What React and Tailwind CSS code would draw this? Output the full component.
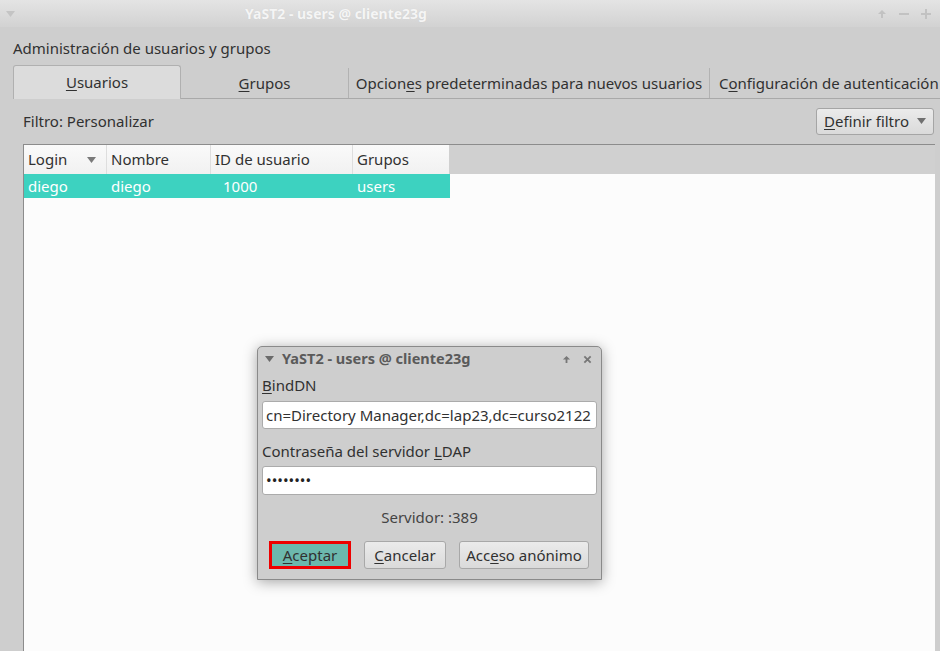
import React from "react";

function U({ children }) {
  return <span className="underline underline-offset-2 decoration-1">{children}</span>;
}

function Tri({ className = "" }) {
  return (
    <svg width="9" height="6" viewBox="0 0 9 6" className={className}>
      <path d="M0 0 L9 0 L4.5 6 Z" fill="currentColor" />
    </svg>
  );
}

export default function App() {
  return (
    <div
      className="relative w-[940px] h-[651px] overflow-hidden bg-[#cecece] text-[15px] text-[#313131]"
      style={{ fontFamily: '"Noto Sans", "Open Sans", sans-serif' }}
    >
      {/* Title bar */}
      <div className="relative h-[27px] flex items-center bg-gradient-to-b from-[#e4e4e4] to-[#d2d2d2] text-[14px]">
        <Tri className="ml-[6px] text-[#c4c4c4]" />
        <div className="ml-[230px] font-bold text-[#f5f5f5] [text-shadow:0_0_1px_rgba(0,0,0,0.08)]">
          YaST2 - users @ cliente23g
        </div>
        <div className="ml-auto mr-[9px] flex items-center gap-[12px] text-[#c2c2c2]">
          <svg width="10" height="10" viewBox="0 0 10 10">
            <path d="M5 1 L9 5 H6 V9 H4 V5 H1 Z" fill="currentColor" />
          </svg>
          <svg width="10" height="10" viewBox="0 0 10 10">
            <rect x="0" y="4" width="10" height="2" fill="currentColor" />
          </svg>
          <svg width="10" height="10" viewBox="0 0 10 10">
            <path d="M4 0 H6 V4 H10 V6 H6 V10 H4 V6 H0 V4 H4 Z" fill="currentColor" />
          </svg>
        </div>
      </div>

      {/* Heading */}
      <div className="pl-[13px] mt-[11px] h-[20px] leading-[20px]">Administración de usuarios y grupos</div>

      {/* Tabs */}
      <div className="mt-[8px] ml-[13px] flex items-end h-[33px] border-b border-[#a9a9a9]">
        <div className="relative top-[1px] w-[168px] h-[34px] flex items-center justify-center bg-[#dcdcdc] border border-b-0 border-[#b0b0b0] rounded-t-[3px]">
          <span>
            <U>U</U>suarios
          </span>
        </div>
        <div className="w-[168px] h-[30px] flex items-center justify-center border-r border-[#b2b2b2]">
          <span>
            <U>G</U>rupos
          </span>
        </div>
        <div className="w-[361px] h-[30px] flex items-center justify-center border-r border-[#b2b2b2]">
          <span className="whitespace-nowrap">
            Opcion<U>e</U>s predeterminadas para nuevos usuarios
          </span>
        </div>
        <div className="flex-1 h-[30px] flex items-center pl-[9px] whitespace-nowrap overflow-hidden">
          <span>
            C<U>o</U>nfiguración de autenticación
          </span>
        </div>
      </div>

      {/* Filter row */}
      <div className="flex items-center h-[28px] mt-[8px] pl-[23px] pr-[6px]">
        <span>Filtro: Personalizar</span>
        <div className="ml-auto w-[118px] h-[27px] flex items-center justify-between pl-[7px] pr-[7px] rounded-[3px] border border-[#a5a5a5] bg-gradient-to-b from-[#ebebeb] to-[#dadada]">
          <span>
            <U>D</U>efinir filtro
          </span>
          <Tri className="text-[#707070]" />
        </div>
      </div>

      {/* Table */}
      <div className="mt-[9px] ml-[23px] w-[912px] h-[510px] border-l border-t border-[#8c8c8c] bg-[#fcfcfc] flex flex-col">
        <div className="flex h-[29px] bg-[#d0d0d0]">
          <div className="w-[83px] flex items-center justify-between pl-[4px] pr-[10px] bg-gradient-to-b from-[#fafafa] to-[#f1f1f1] border-r border-[#dedede]">
            <span>Login</span>
            <Tri className="text-[#7a7a7a]" />
          </div>
          <div className="w-[104px] flex items-center pl-[4px] bg-gradient-to-b from-[#fafafa] to-[#f1f1f1] border-r border-[#dedede]">
            Nombre
          </div>
          <div className="w-[142px] flex items-center pl-[4px] bg-gradient-to-b from-[#fafafa] to-[#f1f1f1] border-r border-[#dedede]">
            ID de usuario
          </div>
          <div className="w-[96px] flex items-center pl-[4px] bg-gradient-to-b from-[#fafafa] to-[#f1f1f1]">
            Grupos
          </div>
        </div>
        <div className="flex h-[24px] w-[426px] bg-[#3dd2c0] text-white items-center">
          <div className="w-[83px] pl-[4px]">diego</div>
          <div className="w-[104px] pl-[4px]">diego</div>
          <div className="w-[142px] pl-[12px]">1000</div>
          <div className="w-[96px] pl-[4px]">users</div>
        </div>
      </div>

      {/* Dialog */}
      <div className="absolute left-[257px] top-[346px] w-[345px] h-[234px] bg-[#cecece] border border-[#8a8a8a] rounded-t-[5px] shadow-[0_2px_14px_rgba(0,0,0,0.35)] flex flex-col">
        <div className="h-[24px] flex items-center pl-[7px] pr-[9px] text-[#5a5a5a]">
          <Tri className="text-[#6a6a6a]" />
          <span className="ml-[8px] font-bold text-[14.5px]">YaST2 - users @ cliente23g</span>
          <div className="ml-auto flex items-center gap-[12px] text-[#777]">
            <svg width="9" height="9" viewBox="0 0 10 10">
              <path d="M5 1 L9 5 H6 V9 H4 V5 H1 Z" fill="currentColor" />
            </svg>
            <svg width="9" height="9" viewBox="0 0 10 10">
              <path d="M1.5 1.5 L8.5 8.5 M8.5 1.5 L1.5 8.5" stroke="currentColor" strokeWidth="2" />
            </svg>
          </div>
        </div>
        <div className="px-[4px] flex flex-col">
          <div className="h-[20px] leading-[20px] mt-[4px]">
            <U>B</U>indDN
          </div>
          <div className="mt-[6px] h-[28px] bg-white border border-[#ababab] rounded-[3px] flex items-center pl-[3px] overflow-hidden whitespace-nowrap">
            cn=Directory Manager,dc=lap23,dc=curso2122
          </div>
          <div className="h-[20px] leading-[20px] mt-[12px]">
            Contraseña del servidor <U>L</U>DAP
          </div>
          <div className="mt-[5px] h-[29px] bg-white border border-[#ababab] rounded-[3px] flex items-center pl-[3px] text-[#222]">
            ••••••••
          </div>
          <div className="mt-[12px] h-[20px] leading-[20px] text-center text-[#444]">Servidor: :389</div>
          <div className="mt-[14px] flex items-center pl-[7px] gap-[13px]">
            <div className="w-[82px] h-[28px] border-[3px] border-[#ee0000] bg-[#6cb8ad] flex items-center justify-center">
              <span>
                <U>A</U>ceptar
              </span>
            </div>
            <div className="w-[82px] h-[28px] border border-[#a8a8a8] rounded-[3px] bg-gradient-to-b from-[#ebebeb] to-[#dadada] flex items-center justify-center">
              <span>
                <U>C</U>ancelar
              </span>
            </div>
            <div className="w-[130px] h-[28px] border border-[#a8a8a8] rounded-[3px] bg-gradient-to-b from-[#ebebeb] to-[#dadada] flex items-center justify-center">
              <span>
                Acc<U>e</U>so anónimo
              </span>
            </div>
          </div>
        </div>
      </div>
    </div>
  );
}
